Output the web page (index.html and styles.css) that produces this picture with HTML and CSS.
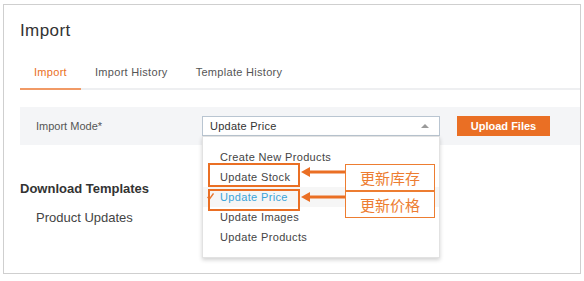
FILE: index.html
```html
<!DOCTYPE html>
<html lang="en">
<head>
  <meta charset="UTF-8">
  <title>Import</title>
  <link rel="stylesheet" href="styles.css">
</head>
<body>
  <div class="card">
    <h1 class="title">Import</h1>

    <nav class="tabs">
      <span class="tab active">Import</span>
      <span class="tab">Import History</span>
      <span class="tab">Template History</span>
    </nav>

    <div class="mode-row">
      <span class="mode-label">Import Mode*</span>
      <div class="select">
        <span class="select-value">Update Price</span>
        <span class="caret"></span>

        <ul class="menu">
          <li>Create New Products</li>
          <li>Update Stock</li>
          <li class="selected">
            <svg class="check" width="7" height="7" viewBox="0 0 7 7"><path d="M0.5 4 L2.5 6 L6.5 0.5" fill="none" stroke="#e8762f" stroke-width="1.4"/></svg>
            Update Price
          </li>
          <li>Update Images</li>
          <li>Update Products</li>
        </ul>
      </div>
      <button class="upload-btn">Upload Files</button>
    </div>

    <h2 class="section-title">Download Templates</h2>
    <div class="template-item">Product Updates</div>
  </div>

  <!-- Annotation overlay -->
  <div class="ring ring-stock"></div>
  <div class="ring ring-price"></div>
  <svg class="arrows" width="46" height="40" viewBox="0 0 46 40">
    <path d="M9 7 H46" stroke="#ea6f24" stroke-width="3"/>
    <path d="M1 7 L10 2 L10 12 Z" fill="#ea6f24"/>
    <path d="M9 32 H46" stroke="#ea6f24" stroke-width="3"/>
    <path d="M1 32 L10 27 L10 37 Z" fill="#ea6f24"/>
  </svg>
  <div class="note note-stock">更新库存</div>
  <div class="note note-price">更新价格</div>
</body>
</html>
```

FILE: styles.css
```css
:root {
  --orange: #ea6f24;
  --note-orange: #ed7d31;
  --blue: #3aa3d8;
  --text: #333;
  --text-light: #555;
}

* {
  margin: 0;
  padding: 0;
  box-sizing: border-box;
}

body {
  position: relative;
  width: 584px;
  height: 281px;
  font-family: "Liberation Sans", Arial, sans-serif;
  color: var(--text);
  background: #fff;
}

.card {
  margin: 4px 3px 0 3px;
  height: 270px;
  border: 1px solid #cfcfcf;
  padding: 16px 0 0 16px;
}

.title {
  font-size: 17px;
  font-weight: normal;
  line-height: 20px;
  letter-spacing: 0.4px;
  color: #333;
}

.tabs {
  display: flex;
  margin-top: 23px;
  border-bottom: 2px solid #eeeff1;
  font-size: 11px;
  line-height: 16px;
  letter-spacing: 0.3px;
}

.tab {
  padding: 0 14px 8px;
  color: #555;
}

.tab.active {
  color: var(--orange);
  border-bottom: 2px solid #f19a66;
  margin-bottom: -2px;
}

.mode-row {
  display: flex;
  align-items: center;
  height: 38px;
  margin-top: 17px;
  padding-left: 16px;
  background: #f4f5f7;
  font-size: 11px;
}

.mode-label {
  width: 166px;
  color: #555;
}

.select {
  position: relative;
  display: flex;
  align-items: center;
  justify-content: space-between;
  width: 238px;
  height: 20px;
  padding: 0 10px 0 7px;
  background: #fff;
  border: 1px solid #b9c5d1;
  color: #333;
}

.select-value {
  letter-spacing: 0.25px;
}

.caret {
  width: 0;
  height: 0;
  border-left: 4px solid transparent;
  border-right: 4px solid transparent;
  border-bottom: 4px solid #9a9a9a;
}

.menu {
  position: absolute;
  top: 19px;
  left: -1px;
  width: 238px;
  padding: 10px 0;
  list-style: none;
  background: #fff;
  border: 1px solid #e2e2e2;
  box-shadow: 0 2px 4px rgba(0, 0, 0, 0.18);
  letter-spacing: 0.35px;
  z-index: 2;
}

.menu li {
  position: relative;
  height: 20px;
  line-height: 20px;
  padding-left: 17px;
  color: #444;
}

.menu li.selected {
  color: var(--blue);
  background: #f6f6f6;
}

.check {
  position: absolute;
  left: 4px;
  top: 6px;
}

.upload-btn {
  width: 93px;
  height: 20px;
  margin-left: 17px;
  border: none;
  background: var(--orange);
  color: #fff;
  font-family: inherit;
  font-size: 11px;
  font-weight: bold;
}

.section-title {
  margin-top: 36px;
  font-size: 13px;
  line-height: 16px;
  font-weight: bold;
  color: #333;
}

.template-item {
  margin-top: 13px;
  padding-left: 16px;
  font-size: 13px;
  line-height: 16px;
  color: #444;
}

/* annotations drawn over the dropdown */
.ring {
  position: absolute;
  left: 208px;
  width: 92px;
  border: 2px solid var(--orange);
  z-index: 3;
}

.ring-stock {
  top: 163px;
  height: 24px;
}

.ring-price {
  top: 189px;
  height: 22px;
}

.arrows {
  position: absolute;
  left: 300px;
  top: 165px;
  z-index: 3;
}

.note {
  position: absolute;
  left: 345px;
  width: 90px;
  height: 27px;
  border: 1px solid var(--note-orange);
  background: #fff;
  color: var(--note-orange);
  font-family: "Noto Sans CJK SC", sans-serif;
  font-size: 15px;
  line-height: 25px;
  text-align: center;
  z-index: 3;
}

.note-stock {
  top: 164px;
}

.note-price {
  top: 191px;
}
```
